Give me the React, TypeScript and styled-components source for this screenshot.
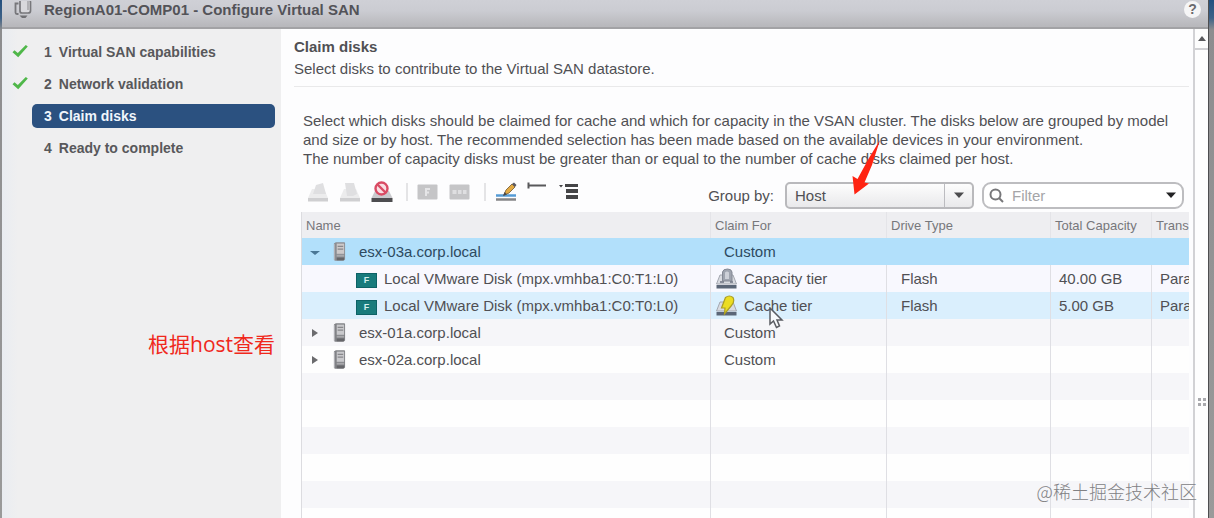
import React from 'react';
import styled, { createGlobalStyle, css } from 'styled-components';

const GlobalStyle = createGlobalStyle`
  *, *::before, *::after { box-sizing: border-box; }
  body {
    margin: 0;
    font-family: "Liberation Sans", Arial, "Noto Sans CJK SC", sans-serif;
    font-size: 15px;
    color: #505054;
    overflow: hidden;
  }
  button, input, select { font: inherit; color: inherit; }
`;

const Screen = styled.div`
  position: relative;
  display: flex;
  height: 100vh;
  padding: 0 5px 0 2px;
  background: linear-gradient(#24507f 0, #3d6187 18px, #8d8d8f 30px, #9a9a9a 100%);
`;

const Dialog = styled.div`
  flex: 1;
  min-width: 0;
  display: flex;
  flex-direction: column;
  border-right: 1px solid #4e4e50;
  background: #fdfdfe;
`;

const TitleBar = styled.header`
  display: flex;
  align-items: center;
  height: 29px;
  flex: none;
  padding: 0 7px 8px 12px;
  background: linear-gradient(#cfd0d6, #cbccd2 40%, #b8b8bc 96%);
  border-bottom: 2px solid #a2a2a5;
`;

const Title = styled.h1`
  flex: 1;
  margin: 0 0 0 12px;
  font-size: 15px;
  line-height: 18px;
  font-weight: bold;
  color: #535358;
`;

const HelpButton = styled.button`
  width: 17px;
  height: 17px;
  padding: 0;
  border: 0;
  border-radius: 50%;
  background: #f5f5f6;
  color: #6a6a6e;
  font-size: 14px;
  line-height: 17px;
  font-weight: bold;
`;

const Body = styled.div`
  flex: 1;
  min-height: 0;
  display: flex;
`;

const Sidebar = styled.nav`
  flex: none;
  width: 279px;
  padding: 11px 6px 0 10px;
  background: linear-gradient(90deg, #e9ecf1 0, #efeff0 16px);
`;

const StepList = styled.ol`
  display: flex;
  flex-direction: column;
  gap: 8px;
  margin: 0;
  padding: 0;
  list-style: none;
`;

const StepItem = styled.li`
  display: grid;
  grid-template-columns: 20px 1fr;
  align-items: center;
`;

const StepButton = styled.button<{ $current?: boolean }>`
  display: flex;
  gap: 7px;
  height: 24px;
  padding: 0 12px;
  align-items: center;
  border: 0;
  border-radius: 5px;
  background: ${(p) => (p.$current ? '#2b5180' : 'transparent')};
  color: ${(p) => (p.$current ? '#f0f6fc' : '#58585b')};
  font-size: 14px;
  font-weight: bold;
`;

const Main = styled.main`
  flex: 1;
  min-width: 0;
  display: flex;
  flex-direction: column;
  padding: 8px 4px 0 13px;
`;

const PageHeader = styled.div`
  padding-bottom: 7px;
  border-bottom: 1px solid #e9e9ea;
`;

const PageTitle = styled.h2`
  margin: 0;
  font-size: 15px;
  line-height: 20px;
`;

const PageText = styled.p`
  margin: 2px 0 0;
  line-height: 20px;
`;

const Section = styled.section`
  flex: 1;
  min-height: 0;
  display: flex;
  flex-direction: column;
  padding: 24px 0 0 7px;
`;

const Intro = styled.p`
  margin: 0;
  padding-left: 2px;
  line-height: 19px;
  white-space: nowrap;
`;

const Line = styled.span`
  display: block;
`;

const Toolbar = styled.div`
  display: flex;
  align-items: center;
  height: 44px;
  flex: none;
  padding: 10px 5px 0 6px;
`;

const Tools = styled.div`
  flex: 1;
  display: flex;
  align-items: center;
  gap: 10px;
  padding-bottom: 6px;
`;

const ToolButton = styled.button`
  display: flex;
  width: 22px;
  height: 22px;
  padding: 0;
  border: 0;
  background: none;
`;

const Divider = styled.span`
  width: 2px;
  height: 18px;
  margin: 0 -1px 0 3px;
  background: #e4e4e6;
`;

const GroupLabel = styled.label`
  margin-right: 11px;
`;

const SelectBox = styled.div`
  display: grid;
  grid-template-columns: 1fr 28px;
  width: 189px;
  height: 27px;
  margin-right: 8px;
  border: 2px solid #b9b9bc;
  border-radius: 5px;
  background: linear-gradient(#fdfdfd, #e9e9eb);
`;

const GroupSelect = styled.select`
  grid-area: 1 / 1 / 2 / 3;
  width: 100%;
  padding: 0 8px;
  border: 0;
  appearance: none;
  background: transparent;
  outline: none;
`;

const SelectArrow = styled.span`
  grid-area: 1 / 2 / 2 / 3;
  display: flex;
  align-items: center;
  justify-content: center;
  border-left: 1px solid #bcbcc0;
  pointer-events: none;
`;

const FilterBox = styled.div`
  display: flex;
  align-items: center;
  gap: 8px;
  width: 202px;
  height: 27px;
  padding: 0 6px 0 5px;
  border: 2px solid #bdbdc0;
  border-radius: 9px;
  background: #fff;
`;

const FilterInput = styled.input`
  flex: 1;
  min-width: 0;
  padding: 0;
  border: 0;
  outline: none;
  background: none;
  &::placeholder { color: #a5a5a8; opacity: 1; }
`;

const PlainButton = styled.button`
  display: flex;
  align-items: center;
  justify-content: center;
  padding: 0;
  border: 0;
  background: none;
`;

const GridFrame = styled.div`
  flex: 1;
  min-height: 0;
  overflow: hidden;
  border-left: 1px solid #dcdce0;
`;

const Grid = styled.table`
  width: 100%;
  table-layout: fixed;
  border-collapse: separate;
  border-spacing: 0;
`;

const HeadCell = styled.th`
  height: 26px;
  padding: 0 0 0 4px;
  overflow: hidden;
  background: #eeeef1;
  border-left: 1px solid #e4e4e8;
  color: #77777b;
  font-size: 13px;
  font-weight: normal;
  text-align: left;
  white-space: nowrap;
  &:first-child { border-left: 0; }
`;

type Tone = 'selected' | 'hover' | 'odd' | 'even' | 'child';

const toneColor: Record<Tone, string> = {
  selected: '#b2e0fb',
  hover: '#daeffd',
  child: '#f8f8fe',
  odd: '#f6f6f9',
  even: '#fefefe',
};

const Row = styled.tr<{ $tone: Tone }>`
  background: ${(p) => toneColor[p.$tone]};
  ${(p) => p.$tone === 'selected' && css`color: #2d4a60;`}
`;

const Cell = styled.td<{ $indent?: number; $divided?: boolean }>`
  height: 27px;
  padding: 0 0 0 ${(p) => p.$indent ?? 8}px;
  overflow: hidden;
  white-space: nowrap;
  border-left: 1px solid ${(p) => (p.$divided ? '#dfdfe4' : 'transparent')};
  &:first-child { border-left: 0; }
`;

const Content = styled.div<{ $gap: number }>`
  display: flex;
  align-items: center;
  gap: ${(p) => p.$gap}px;
`;

const FlashBadge = styled.span`
  display: flex;
  align-items: center;
  justify-content: center;
  width: 21px;
  height: 15px;
  margin-top: 3px;
  border: 1px solid #0d6266;
  background: #187b7c;
  color: #d5f0ee;
  font-size: 9px;
  font-weight: bold;
`;

const ScrollRail = styled.div`
  flex: none;
  width: 15px;
  display: flex;
  flex-direction: column;
  border-left: 2px solid #d2d2d5;
  background: #f3f3f4;
`;

const ScrollUp = styled(PlainButton)`
  height: 21px;
  flex: none;
  border-bottom: 2px solid #d0d0d3;
  background: #fdfdfd;
`;

const ScrollThumb = styled.div`
  flex: 1;
  display: flex;
  align-items: center;
  justify-content: center;
  padding-top: 236px;
  background: #fefefe;
`;

const Annotation = styled.span`
  position: absolute;
  left: 148px;
  top: 330px;
  color: #f0281c;
  font-family: "Open Sans", "Noto Sans CJK SC", sans-serif;
  font-size: 21px;
  line-height: 28px;
`;

const Watermark = styled.span`
  position: absolute;
  right: 17px;
  bottom: 14px;
  color: #818184;
  font-family: "Noto Sans CJK SC", sans-serif;
  font-size: 18px;
  font-weight: 300;
  line-height: 26px;
`;

const RedArrow = styled.svg`
  position: absolute;
  left: 850px;
  top: 138px;
  pointer-events: none;
`;

const Pointer = styled.svg`
  position: absolute;
  left: 768px;
  top: 307px;
  pointer-events: none;
`;

const Caret = ({ color = '#4c4c4e', size = 10 }: { color?: string; size?: number }) => (
  <svg width={size} height="6" viewBox="0 0 10 6" aria-hidden="true">
    <path d="M0 0.5h10L5 6z" fill={color} />
  </svg>
);

const CheckMark = () => (
  <svg width="16" height="14" viewBox="0 0 16 14" aria-hidden="true">
    <path d="M0.500 8.200 2.500 6.200l3.300 2.800L13.800 1l2 1.500L6.200 13.200z" fill="#4fb749" />
  </svg>
);

const ClusterIcon = () => (
  <svg width="18" height="18" viewBox="0 0 18 18" fill="none" aria-hidden="true">
    <path d="M6 0v10q0 2 2 2h6q2.500 0 2.500-2V1q0-1-1-1" fill="#d8d8dc" stroke="#77777b" strokeWidth="1.700" />
    <path d="M4.500 2.500H1.500v9q0 1.500 1.500 1.500h1.500" stroke="#77777b" strokeWidth="1.800" />
    <path d="M14 0v9" stroke="#a5a5a9" strokeWidth="1.500" />
    <path d="M5.500 14.500 8 17h3.500l2-2.500z" fill="#707074" />
  </svg>
);

const HostIcon = ({ faded = false }: { faded?: boolean }) => (
  <svg width="13" height="21" viewBox="0 0 14 21" aria-hidden="true">
    <path d="M1 2 3 0.500h9.500l0.500 1V19l-2 1.500H2L1 19.500z" fill={faded ? '#8b8d92' : '#818286'} />
    <path d="M4 2h8v11H4z" fill={faded ? '#cdc9c9' : '#c9c9cc'} />
    <path d="M5 5h6M5 8h6" stroke="#88888b" strokeWidth="1.200" />
    <path d="M4 14h8v2H4z" fill="#a9a9ac" />
    <path d="M4 17h8v3H4z" fill="#66666a" />
    <path d="M1.500 2.500v17" stroke="#b8b9bd" />
  </svg>
);

const DriveIcon = ({ cache = false }: { cache?: boolean }) => (
  <svg width="21" height="21" viewBox="0 0 21 21" aria-hidden="true">
    <path d="M4 7h13l3.500 9H0.500z" fill="#d9dbe1" stroke="#a3a6af" />
    <path d="M0.500 17h20v3.500h-20z" fill="#5b6677" />
    {cache ? (
      <path d="M9.500 2.500q4-3 7.500 0 2 4-1.500 8L8.500 19l0.500-6H5.500z" fill="#ecdd22" stroke="#ab9f24" strokeWidth="1.200" />
    ) : (
      <>
        <path d="M6.500 13V4q0.500-3 5-3 4 0 4.500 3v9z" fill="#9fa4af" stroke="#848995" />
        <path d="M9 11V4.500q2-2 4 0V11z" fill="#cdd0d8" />
        <path d="M4 14h4M14 14h3" stroke="#6d7381" strokeWidth="1.500" />
      </>
    )}
  </svg>
);

const DimDrive = ({ second = false }: { second?: boolean }) => (
  <svg width="22" height="22" viewBox="0 0 22 22" aria-hidden="true">
    <path d="M5 8h12l4 9H1z" fill="#ececed" />
    <path d={second ? 'M6 2h9l3 11-4 2H8z' : 'M9 4l7-2 3 11H6z'} fill="#dfdfe1" />
    <path d="M1 17h20v3.500H1z" fill="#cfcfd1" />
  </svg>
);

const BlockedDrive = () => (
  <svg width="22" height="22" viewBox="0 0 22 22" aria-hidden="true">
    <path d="M4 10h14l3.500 7H0.500z" fill="#c9c9cd" />
    <path d="M0.500 17h21v4h-21z" fill="#4d4d50" />
    <circle cx="10.500" cy="7.500" r="6" fill="#f9dfe3" stroke="#d94b64" strokeWidth="2.400" />
    <path d="M6.500 3.500 14.500 11.500" stroke="#d94b64" strokeWidth="2.400" />
  </svg>
);

const DimCard = ({ wide = false }: { wide?: boolean }) => (
  <svg width="22" height="22" viewBox="0 0 22 22" aria-hidden="true">
    <rect x="0.500" y="3.500" width="20" height="15" rx="1" fill="#c5c5c7" />
    {wide ? (
      <path d="M3.500 11h4M9 11h3.500M14 11h3.500" stroke="#dfdfe1" strokeWidth="4" />
    ) : (
      <path d="M9 15V8h4M9 11.500h3" fill="none" stroke="#e5e5e7" strokeWidth="2" />
    )}
  </svg>
);

const PencilIcon = () => (
  <svg width="22" height="22" viewBox="0 0 22 22" aria-hidden="true">
    <path d="M1 14.500h20" stroke="#559bd6" strokeWidth="2.500" />
    <path d="M1 18.500h20" stroke="#858587" strokeWidth="2.500" />
    <path d="M9 14 11 9 17 3l3 3-6 6z" fill="#e2aa43" stroke="#8b7045" />
    <path d="M17 3 19 1.500 21.500 4 20 6z" fill="#5c5a62" />
    <path d="M8 15 9.500 11 12 13.500z" fill="#48484b" />
  </svg>
);

const CollapseIcon = () => (
  <svg width="22" height="22" viewBox="0 0 22 22" aria-hidden="true">
    <path d="M1.500 1.500v6M2 4.500h17" stroke="#59595b" strokeWidth="2" />
  </svg>
);

const ExpandIcon = () => (
  <svg width="22" height="22" viewBox="0 0 22 22" aria-hidden="true">
    <path d="M0 4h4L2 6.500zM6 3h13v3H6zM7 8h12v4H7zM7 14h12v4H7z" fill="#454547" />
  </svg>
);

const SearchIcon = () => (
  <svg width="15" height="15" viewBox="0 0 15 15" fill="none" stroke="#77777a" strokeWidth="2" aria-hidden="true">
    <circle cx="6.500" cy="6.500" r="5" />
    <path d="m10 10 4 4" />
  </svg>
);

const steps = [
  { label: 'Virtual SAN capabilities', done: true },
  { label: 'Network validation', done: true },
  { label: 'Claim disks', current: true },
  { label: 'Ready to complete' },
];

type DataRow =
  | { kind: 'host'; name: string; open?: boolean; tone: Tone }
  | { kind: 'disk'; name: string; cache?: boolean; size: string; tone: Tone }
  | { kind: 'blank'; tone: Tone };

const rows: DataRow[] = [
  { kind: 'host', name: 'esx-03a.corp.local', open: true, tone: 'selected' },
  { kind: 'disk', name: 'Local VMware Disk (mpx.vmhba1:C0:T1:L0)', size: '40.00 GB', tone: 'child' },
  { kind: 'disk', name: 'Local VMware Disk (mpx.vmhba1:C0:T0:L0)', cache: true, size: '5.00 GB', tone: 'hover' },
  { kind: 'host', name: 'esx-01a.corp.local', tone: 'odd' },
  { kind: 'host', name: 'esx-02a.corp.local', tone: 'even' },
  { kind: 'blank', tone: 'odd' },
  { kind: 'blank', tone: 'even' },
  { kind: 'blank', tone: 'odd' },
  { kind: 'blank', tone: 'even' },
  { kind: 'blank', tone: 'odd' },
  { kind: 'blank', tone: 'even' },
];

const GridRow = ({ row }: { row: DataRow }) => {
  const divided = row.tone !== 'selected';
  if (row.kind === 'blank') {
    return (
      <Row $tone={row.tone}>
        {[0, 1, 2, 3, 4].map((i) => <Cell key={i} $divided />)}
      </Row>
    );
  }
  if (row.kind === 'host') {
    return (
      <Row $tone={row.tone}>
        <Cell>
          <Content $gap={13}>
            <PlainButton aria-label={row.open ? 'Collapse' : 'Expand'}>
              <svg width="10" height="10" viewBox="0 0 10 10" aria-hidden="true">
                <path d={row.open ? 'M0 4h10L5 8z' : 'M2 1v8l6-4z'} fill={row.open ? '#4a7795' : '#6b6b6e'} />
              </svg>
            </PlainButton>
            <HostIcon faded={row.open} />
            <span>{row.name}</span>
          </Content>
        </Cell>
        <Cell $divided={divided} $indent={13}>Custom</Cell>
        <Cell $divided={divided} />
        <Cell $divided={divided} />
        <Cell $divided={divided} />
      </Row>
    );
  }
  return (
    <Row $tone={row.tone}>
      <Cell $indent={54}>
        <Content $gap={7}>
          <FlashBadge>F</FlashBadge>
          <span>{row.name}</span>
        </Content>
      </Cell>
      <Cell $divided $indent={5}>
        <Content $gap={7}>
          <DriveIcon cache={row.cache} />
          <span>{row.cache ? 'Cache tier' : 'Capacity tier'}</span>
        </Content>
      </Cell>
      <Cell $divided $indent={14}>Flash</Cell>
      <Cell $divided>{row.size}</Cell>
      <Cell $divided>Para</Cell>
    </Row>
  );
};

export default function App() {
  return (
    <Screen>
      <GlobalStyle />
      <Dialog>
        <TitleBar>
          <ClusterIcon />
          <Title>RegionA01-COMP01 - Configure Virtual SAN</Title>
          <HelpButton aria-label="Help">?</HelpButton>
        </TitleBar>
        <Body>
          <Sidebar aria-label="Wizard steps">
            <StepList>
              {steps.map((step, i) => (
                <StepItem key={step.label}>
                  <span>{step.done && <CheckMark />}</span>
                  <StepButton $current={step.current} aria-current={step.current ? 'step' : undefined}>
                    <span>{i + 1}</span>
                    <span>{step.label}</span>
                  </StepButton>
                </StepItem>
              ))}
            </StepList>
          </Sidebar>
          <Main>
            <PageHeader>
              <PageTitle>Claim disks</PageTitle>
              <PageText>Select disks to contribute to the Virtual SAN datastore.</PageText>
            </PageHeader>
            <Section>
              <Intro>
                <Line>Select which disks should be claimed for cache and which for capacity in the VSAN cluster. The disks below are grouped by model</Line>
                <Line>and size or by host. The recommended selection has been made based on the available devices in your environment.</Line>
                <Line>The number of capacity disks must be greater than or equal to the number of cache disks claimed per host.</Line>
              </Intro>
              <Toolbar>
                <Tools>
                  <ToolButton aria-label="Claim for capacity tier"><DimDrive /></ToolButton>
                  <ToolButton aria-label="Claim for cache tier"><DimDrive second /></ToolButton>
                  <ToolButton aria-label="Do not claim"><BlockedDrive /></ToolButton>
                  <Divider />
                  <ToolButton aria-label="Mark as flash"><DimCard /></ToolButton>
                  <ToolButton aria-label="Mark as HDD"><DimCard wide /></ToolButton>
                  <Divider />
                  <ToolButton aria-label="Edit"><PencilIcon /></ToolButton>
                  <ToolButton aria-label="Collapse all"><CollapseIcon /></ToolButton>
                  <ToolButton aria-label="Expand all"><ExpandIcon /></ToolButton>
                </Tools>
                <GroupLabel htmlFor="group-by">Group by:</GroupLabel>
                <SelectBox>
                  <GroupSelect id="group-by" defaultValue="host">
                    <option value="host">Host</option>
                  </GroupSelect>
                  <SelectArrow><Caret /></SelectArrow>
                </SelectBox>
                <FilterBox>
                  <SearchIcon />
                  <FilterInput aria-label="Filter" placeholder="Filter" />
                  <PlainButton aria-label="Filter options"><Caret color="#222224" /></PlainButton>
                </FilterBox>
              </Toolbar>
              <GridFrame>
                <Grid>
                  <colgroup>
                    <col />
                    <col width="176" />
                    <col width="164" />
                    <col width="101" />
                    <col width="38" />
                  </colgroup>
                  <thead>
                    <tr>
                      <HeadCell>Name</HeadCell>
                      <HeadCell>Claim For</HeadCell>
                      <HeadCell>Drive Type</HeadCell>
                      <HeadCell>Total Capacity</HeadCell>
                      <HeadCell>Trans</HeadCell>
                    </tr>
                  </thead>
                  <tbody>
                    {rows.map((row, i) => <GridRow key={i} row={row} />)}
                  </tbody>
                </Grid>
              </GridFrame>
            </Section>
          </Main>
          <ScrollRail>
            <ScrollUp aria-label="Scroll up">
              <svg width="8" height="5" viewBox="0 0 8 5" aria-hidden="true">
                <path d="M4 0 8 5H0z" fill="#59595c" />
              </svg>
            </ScrollUp>
            <ScrollThumb>
              <svg width="8" height="8" viewBox="0 0 8 8" aria-hidden="true">
                <path d="M0 0h3v3H0zM5 0h3v3H5zM0 5h3v3H0zM5 5h3v3H5z" fill="#a9a9ad" />
              </svg>
            </ScrollThumb>
          </ScrollRail>
        </Body>
      </Dialog>
      <Annotation>根据host查看</Annotation>
      <Watermark>@稀土掘金技术社区</Watermark>
      <RedArrow width="34" height="60" viewBox="0 0 34 60" aria-hidden="true">
        <path d="M30 2 19 20 7.500 41 2.500 38 4.500 56.500 19 45.500 14.500 44.500 22 27z" fill="#ff2412" />
      </RedArrow>
      <Pointer width="16" height="24" viewBox="0 0 16 24" aria-hidden="true">
        <path d="M2 1v16l3.500-3 3 6.500 3-1.500-2.500-6H14z" fill="#f8fafc" stroke="#5a5c62" strokeWidth="1.500" />
      </Pointer>
    </Screen>
  );
}
